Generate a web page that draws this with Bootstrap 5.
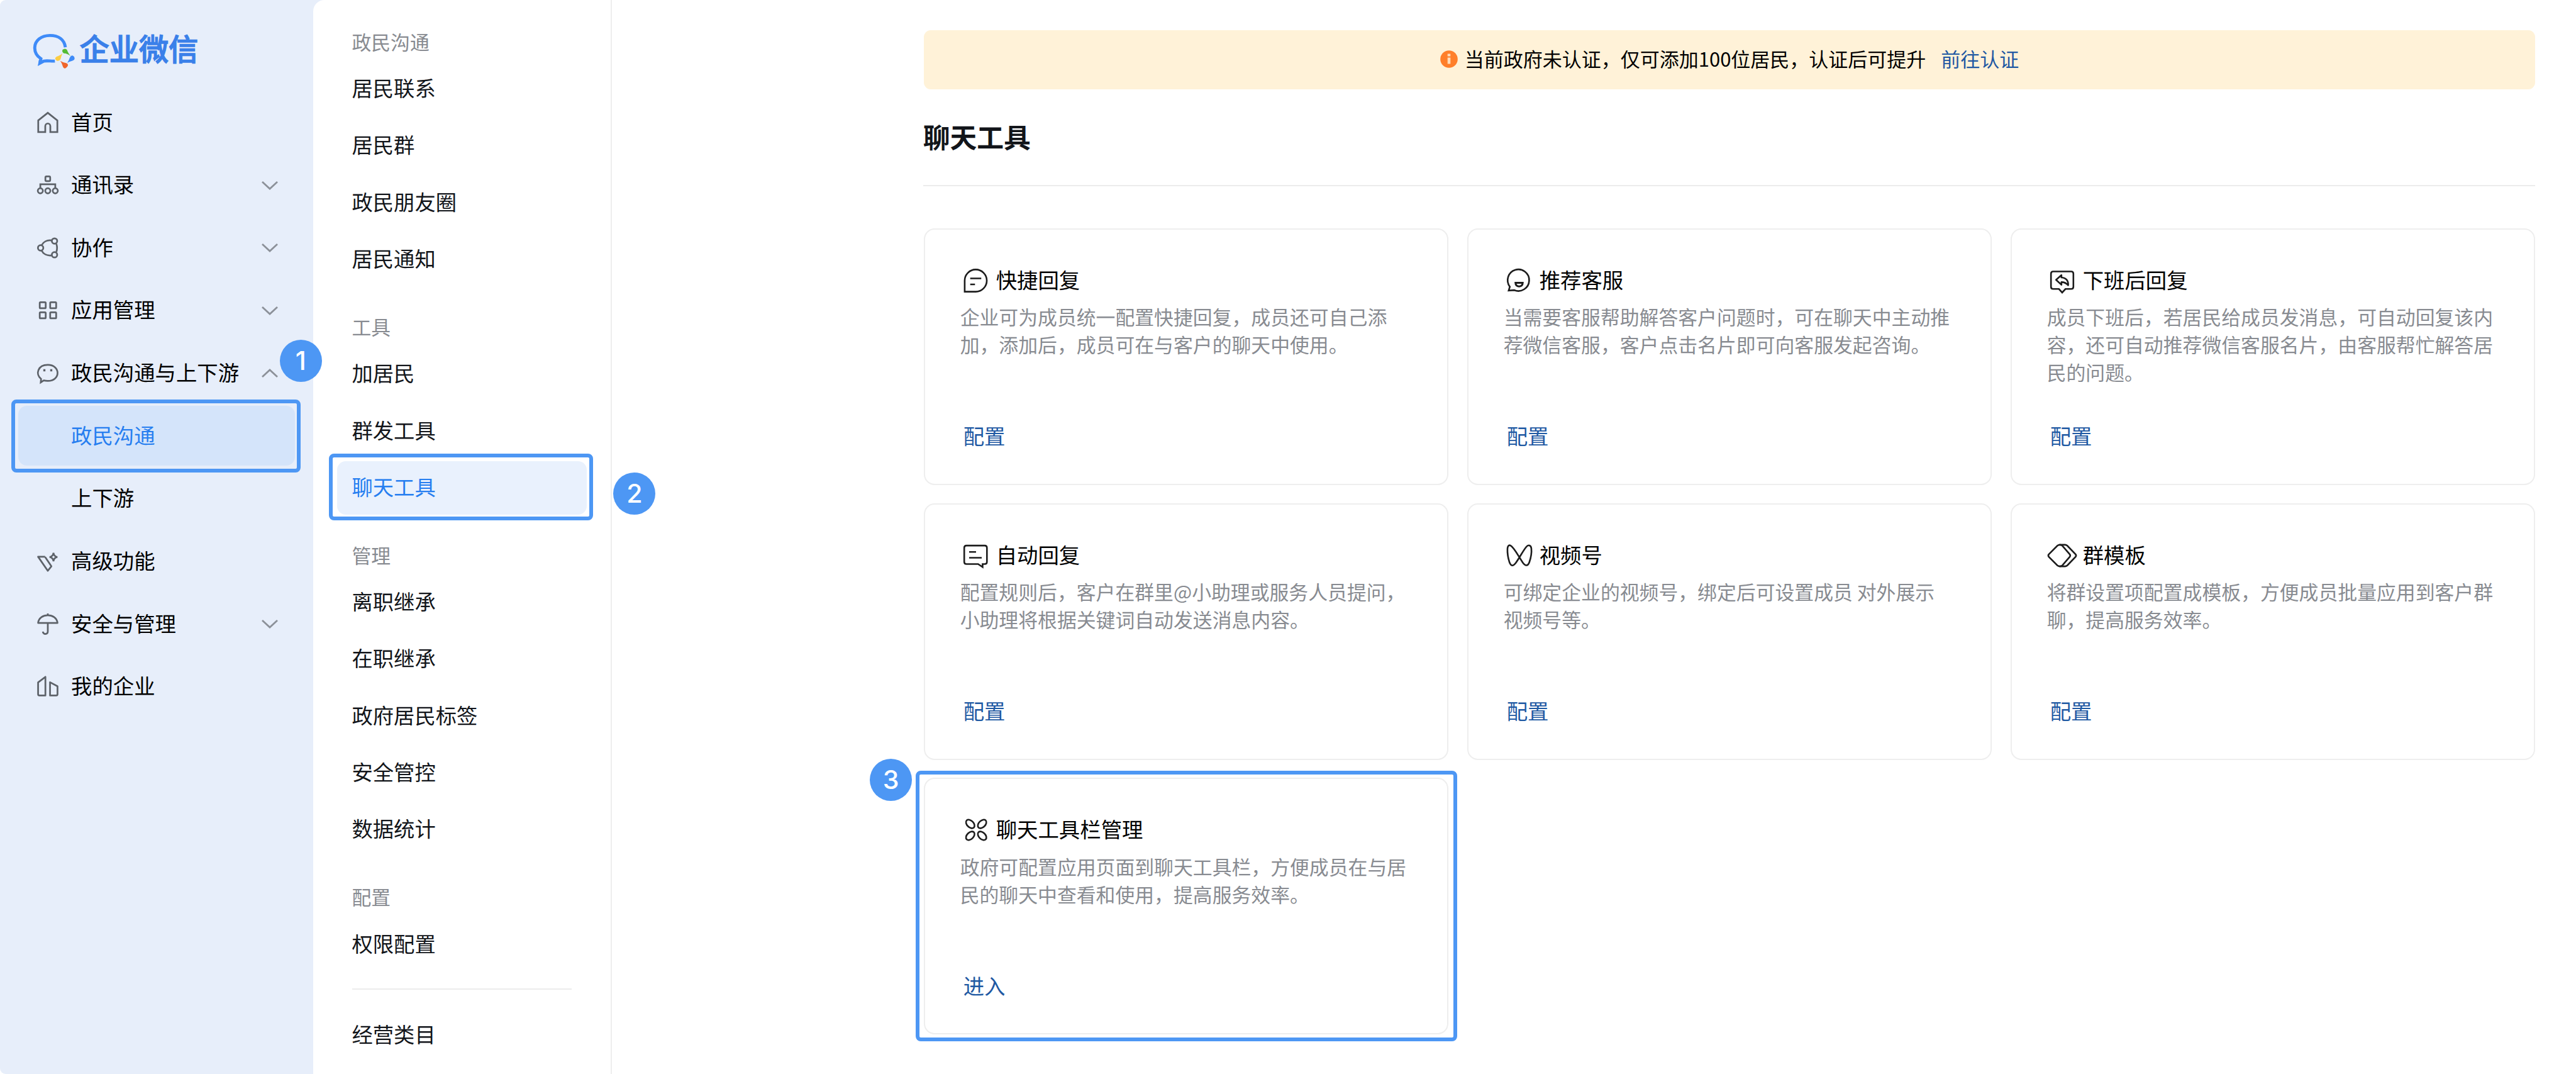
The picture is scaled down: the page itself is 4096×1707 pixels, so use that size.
<!DOCTYPE html>
<html lang="zh-CN">
<head>
<meta charset="utf-8">
<meta name="viewport" content="width=device-width, initial-scale=1">
<title>企业微信 - 聊天工具</title>
<link href="https://cdn.jsdelivr.net/npm/bootstrap@5.3.0/dist/css/bootstrap.min.css" rel="stylesheet">
<style>
  html, body { height: 100%; }
  body { font-family: "Noto Sans CJK SC", sans-serif; font-size: 33.4px; color: #000; background: #fff; overflow: hidden; }
  a { text-decoration: none; }
  .shell { height: 1707px; position: relative; }
  .leftzone { background: #e7eefa; border-radius: 9px 0 0 9px; }
  .side { width: 498px; }
  .brand { height: 144.7px; padding-left: 51px; padding-top: 51px; }
  .brand-name { font-size: 47.2px; font-weight: 500; -webkit-text-stroke: 1.3px #3a80e9; line-height: 50px; color: #3a80e9; margin-left: 6.5px; }
  .side .nav-link { height: 99.67px; padding: 0 56px 4px 57px; color: #000; line-height: 40px; white-space: nowrap; }
  .side .nav-link span { margin-left: 18px; }
  .side .nav-link .sub-label { margin-left: 56px; }
  .side .picked { color: #267ef0; position: relative; z-index: 0; }
  .side .picked::before { content: ""; position: absolute; z-index: -1; inset: 2.5px 28.8px 2.5px 28.8px; background: #d4e4fa; border-radius: 14px; }
  .glyph { width: 38px; height: 38px; flex: none; fill: none; stroke: #5d6269; stroke-width: 1.15; overflow: visible; position: relative; top: 2px; }
  .chev { width: 26px; height: 15px; flex: none; fill: none; stroke: #8c9199; stroke-width: 2.8; margin-left: auto; position: relative; top: 3px; overflow: visible; }
  .subnav { width: 474.5px; background: #fff; border-right: 2.4px solid #eee; border-top-left-radius: 18px; padding-top: 37.8px; }
  .subnav h6 { height: 56.4px; line-height: 56.4px; font-size: 30.8px; font-weight: 400; color: #888b91; margin: 0; padding-left: 61.5px; }
  .subnav .nav { margin-bottom: 36px; }
  .subnav .nav-link { font-size: 33.3px; height: 90.2px; line-height: 90.2px; padding: 0 0 0 61.5px; color: #12151a; position: relative; z-index: 0; }
  .subnav .picked { color: #267ef0; }
  .subnav .picked::before { content: ""; position: absolute; z-index: -1; inset: 5.5px 38px -0.500px 38.4px; background: #e9f1fd; border-radius: 14px; }
  .subnav hr { border: 0; height: 2.4px; background: #ececec; opacity: 1; margin: -9.1px 62px 25.3px 62.3px; }
  .subnav .last-group { margin-bottom: 0; }
  .stage { padding: 47.5px 64.6px 0 496.2px; }
  .notice { height: 94.2px; background: #fff2d8; border: 0; border-radius: 11px; padding: 0 0 3px; font-size: 31px; margin: 0; color: #000; }
  .notice svg { width: 28px; height: 28px; margin-right: 11px; position: relative; top: 1px; }
  .blue-link { color: #1f59a3; }
  .page-title { font-size: 42.8px; font-weight: 700; line-height: 60px; color: #12151a; margin: 44px 0 0 -1px; padding-bottom: 48.1px; border-bottom: 2.4px solid #ececec; }
  .tools { display: grid; grid-template-columns: repeat(3, 834.4px); column-gap: 29.6px; row-gap: 28.5px; margin-top: 67.4px; }
  .tools .card { height: 408.1px; border: 2.4px solid #eee; border-radius: 17px; padding: 56px 50px 0 56px; }
  .tool-head { height: 50px; padding-left: 5px; line-height: 50px; }
  .tool-head svg { width: 38px; height: 38px; fill: none; stroke: #1c1c1c; stroke-width: 1.1; overflow: visible; margin-right: 14px; position: relative; top: 0; }
  .tool-head span { position: relative; top: -2px; }
  .tool-text { font-size: 30.85px; line-height: 44px; height: 166px; color: #888b91; margin: 10.2px 0 0; width: 712px; }
  .tool-link { line-height: 50px; margin: 20px 0 0 5px; align-self: flex-start; }
  /* guide marks laid over the page */
  .frame { position: absolute; z-index: 2; border: 6.6px solid #4d97f4; border-radius: 8px; }
  .step { position: absolute; z-index: 3; width: 67px; height: 67px; border-radius: 50%; background: #4d97f4; color: #fff; font: 500 41px/67px Inter, "Liberation Sans", sans-serif; text-align: center; }
  .frame-a { left: 17.5px; top: 634.7px; width: 460.7px; height: 116.3px; }
  .frame-b { left: 522.5px; top: 721.4px; width: 420.7px; height: 106px; }
  .frame-c { left: 1456px; top: 1225px; width: 860.5px; height: 430.3px; }
  .step-a { left: 444.7px; top: 539.5px; }
  .step-b { left: 975.3px; top: 750.6px; }
  .step-c { left: 1383px; top: 1206px; }
</style>
<script src="https://cdn.jsdelivr.net/npm/bootstrap@5.3.0/dist/js/bootstrap.bundle.min.js"></script>
</head>
<body>
<div class="shell d-flex">
  <div class="leftzone d-flex flex-shrink-0">
    <aside class="side">
      <div class="brand d-flex align-items-start">
        <svg width="69" height="60.1" viewBox="50 50 310 270" fill="none">
          <path d="M288 158C280 105 240 74 178 74C115 74 69 112 69 162C69 195 86 222 113 240L106 272L134 257C160 252 185 259 213 257" stroke="#3f8bf8" stroke-width="22"/>
          <path d="M95 287L98 250L135 262Z" fill="#3f8bf8"/>
          <path d="M268 176q18-14 31 0q6 20 26 46q-22-19-48-20q-16-10-9-26Z" fill="#55bb33"/>
          <path d="M215 240q2-14 20-18q20-6 32-20q-8 18-14 42q-10 14-25 11q-12-6-13-15Z" fill="#fbcd45"/>
          <path d="M354 238q-1 14-18 17q-18 4-35 15q12-16 18-37q10-20 23-14q12 6 12 19Z" fill="#3f8bf8"/>
          <path d="M286 310q-14-2-18-20q-4-18-17-34q20 13 43 15q16 6 11 21q-8 15-19 18Z" fill="#f0652b"/>
        </svg>
        <div class="brand-name">企业微信</div>
      </div>
      <nav class="nav flex-column">
        <a class="nav-link d-flex align-items-center" href="#"><svg class="glyph" viewBox="0 0 16 16"><path d="M1.6 6.5L8 1.4l6.4 5.1v7.8H9.7v-3.9c0-2.5-3.4-2.5-3.4 0v3.9H1.6Z"/></svg><span>首页</span></a>
        <a class="nav-link d-flex align-items-center" href="#"><svg class="glyph" viewBox="0 0 16 16"><rect x="6.4" y="2.3" width="3.2" height="3.1" rx=".7"/><path d="M3 9.9V7.5h10v2.4"/><circle cx="3" cy="11.9" r="1.7"/><circle cx="8" cy="11.9" r="1.7"/><circle cx="13" cy="11.9" r="1.7"/></svg><span>通讯录</span><svg class="chev" viewBox="0 0 26 15"><path d="M1 1l12 11L25 1"/></svg></a>
        <a class="nav-link d-flex align-items-center" href="#"><svg class="glyph" viewBox="0 0 16 16"><circle cx="3.2" cy="8" r="1.8"/><circle cx="12.5" cy="3.4" r="1.8"/><circle cx="12.5" cy="12.6" r="1.8"/><path d="M3.9 6.2C5 4 7.400 2.600 10.500 3M3.900 9.800C5 12 7.400 13.400 10.500 13M13.700 5.200q1 2.800 0 5.600"/></svg><span>协作</span><svg class="chev" viewBox="0 0 26 15"><path d="M1 1l12 11L25 1"/></svg></a>
        <a class="nav-link d-flex align-items-center" href="#"><svg class="glyph" viewBox="0 0 16 16"><rect x="2.600" y="2.700" width="4" height="4" rx=".5"/><rect x="9.600" y="2.700" width="4" height="4" rx=".5"/><rect x="2.600" y="9.400" width="4" height="4" rx=".5"/><rect x="9.600" y="9.400" width="4" height="4" rx=".5"/></svg><span>应用管理</span><svg class="chev" viewBox="0 0 26 15"><path d="M1 1l12 11L25 1"/></svg></a>
        <a class="nav-link d-flex align-items-center" href="#"><svg class="glyph" viewBox="0 0 16 16"><path d="M3.500 11.900C-.6 8.600 1.400 2.500 8 2.500c8.700 0 8.700 10.700 0 10.700-1.300 0-2-.1-2.700-.3l-2 1.300Z"/><path d="M5.700 5.400v1.400M10.300 5.400v1.400" stroke-width="1.400"/></svg><span>政民沟通与上下游</span><svg class="chev" viewBox="0 0 26 15"><path d="M1 12L13 1l12 11"/></svg></a>
        <a class="nav-link picked d-flex align-items-center" href="#"><span class="sub-label">政民沟通</span></a>
        <a class="nav-link d-flex align-items-center" href="#"><span class="sub-label">上下游</span></a>
        <a class="nav-link d-flex align-items-center" href="#"><svg class="glyph" viewBox="0 0 16 16"><path d="M6.200 5H1.500L8 14.400 10.400 11.400 6.200 5.200" stroke-linejoin="round"/><path d="M11.800 2.400q.3 2.500 2.600 2.800-2.300.3-2.600 2.800-.3-2.500-2.600-2.800 2.300-.3 2.600-2.800Z"/></svg><span>高级功能</span></a>
        <a class="nav-link d-flex align-items-center" href="#"><svg class="glyph" viewBox="0 0 16 16"><path d="M1.500 7.200C2.300.3 13.700.3 14.500 7.200ZM8 1.900V.8M8 7.200v5.600c0 2.300-3.200 2.300-3.300.2" stroke-linejoin="round"/></svg><span>安全与管理</span><svg class="chev" viewBox="0 0 26 15"><path d="M1 1l12 11L25 1"/></svg></a>
        <a class="nav-link d-flex align-items-center" href="#"><svg class="glyph" viewBox="0 0 16 16"><path d="M1.500 5.300L6.400 1.600v12.500H2.400q-.9 0-.9-.9ZM9.500 5.200l5 2.700v5.300q0 .9-.9.900H9.500Z" stroke-linejoin="round"/></svg><span>我的企业</span></a>
      </nav>
    </aside>
    <aside class="subnav">
      <h6>政民沟通</h6>
      <nav class="nav flex-column">
        <a class="nav-link" href="#">居民联系</a>
        <a class="nav-link" href="#">居民群</a>
        <a class="nav-link" href="#">政民朋友圈</a>
        <a class="nav-link" href="#">居民通知</a>
      </nav>
      <h6>工具</h6>
      <nav class="nav flex-column">
        <a class="nav-link" href="#">加居民</a>
        <a class="nav-link" href="#">群发工具</a>
        <a class="nav-link picked" href="#">聊天工具</a>
      </nav>
      <h6>管理</h6>
      <nav class="nav flex-column">
        <a class="nav-link" href="#">离职继承</a>
        <a class="nav-link" href="#">在职继承</a>
        <a class="nav-link" href="#">政府居民标签</a>
        <a class="nav-link" href="#">安全管控</a>
        <a class="nav-link" href="#">数据统计</a>
      </nav>
      <h6>配置</h6>
      <nav class="nav flex-column">
        <a class="nav-link" href="#">权限配置</a>
      </nav>
      <hr>
      <nav class="nav flex-column last-group">
        <a class="nav-link" href="#">经营类目</a>
      </nav>
    </aside>
  </div>
  <main class="stage flex-grow-1">
    <div class="notice alert d-flex align-items-center justify-content-center">
      <svg viewBox="0 0 28 28"><circle cx="14" cy="14" r="13.800" fill="#ff7f2a"/><path d="M14 5.500v4M14 11.500v10" stroke="#ffdcb8" stroke-width="4.600"/></svg>
      <span>当前政府未认证，仅可添加100位居民，认证后可提升</span>
      <a class="blue-link ms-4" href="#">前往认证</a>
    </div>
    <h1 class="page-title">聊天工具</h1>
    <section class="tools">
      <div class="card">
        <div class="tool-head d-flex align-items-center"><svg viewBox="0 0 16 16"><path d="M.8 15.400V8a7.400 7.400 0 1 1 7.400 7.400Z"/><path d="M4.500 6.500h7.400M4.500 10.500h3.200"/></svg><span>快捷回复</span></div>
        <p class="tool-text">企业可为成员统一配置快捷回复，成员还可自己添加，添加后，成员可在与客户的聊天中使用。</p>
        <a class="blue-link tool-link" href="#">配置</a>
      </div>
      <div class="card">
        <div class="tool-head d-flex align-items-center"><svg viewBox="0 0 16 16"><path d="M2 12.100A7.200 7.200 0 1 1 5 14.400L1.200 14.700Z"/><path d="M5.800 9.500h4.800c0 3.200-4.800 3.200-4.800 0Z" stroke-width="1.300"/></svg><span>推荐客服</span></div>
        <p class="tool-text">当需要客服帮助解答客户问题时，可在聊天中主动推荐微信客服，客户点击名片即可向客服发起咨询。</p>
        <a class="blue-link tool-link" href="#">配置</a>
      </div>
      <div class="card">
        <div class="tool-head d-flex align-items-center"><svg viewBox="0 0 16 16"><path d="M2 1.900h12q1.500 0 1.500 1.500v8.700q0 1.500-1.500 1.500h-3.800L8 16l-2.200-2.400H2Q.5 13.600.5 12.100V3.400Q.5 1.900 2 1.900Z"/><path d="M7.500 4.300L3.900 7.500 7.500 10.800V9c2 0 3.100.5 4.500 2.100C12.200 8.100 10.600 6.100 7.500 5.900Z" stroke-linejoin="round"/></svg><span>下班后回复</span></div>
        <p class="tool-text">成员下班后，若居民给成员发消息，可自动回复该内容，还可自动推荐微信客服名片，由客服帮忙解答居民的问题。</p>
        <a class="blue-link tool-link" href="#">配置</a>
      </div>
      <div class="card">
        <div class="tool-head d-flex align-items-center"><svg viewBox="0 0 16 16"><path d="M2 1.300h12.200q1.500 0 1.500 1.500v9.400q0 1.500-1.500 1.500h-1.400v2L9.800 13.700H2Q.5 13.700.5 12.200V2.800Q.5 1.300 2 1.300Z"/><path d="M3.800 5.600h4.600M3.800 9.500h8.400"/></svg><span>自动回复</span></div>
        <p class="tool-text">配置规则后，客户在群里@小助理或服务人员提问，小助理将根据关键词自动发送消息内容。</p>
        <a class="blue-link tool-link" href="#">配置</a>
      </div>
      <div class="card">
        <div class="tool-head d-flex align-items-center"><svg viewBox="0 0 16 16"><path d="M8.300 9C6.600 6.300 4.800 3.200 3 1.700 1.500.4.500 1.400.4 3.600c-.1 2.800.4 6 1.300 8.800 1 2.900 2.500 2.900 4.400.3C8.800 9 10.300 5.600 12.900 2.300c1.500-1.900 3.300-1.300 3.500 1 .3 3-.3 6.100-1.300 9-1 2.900-2.700 2.900-4.500.3Z"/></svg><span>视频号</span></div>
        <p class="tool-text">可绑定企业的视频号，绑定后可设置成员 对外展示<br>视频号等。</p>
        <a class="blue-link tool-link" href="#">配置</a>
      </div>
      <div class="card">
        <div class="tool-head d-flex align-items-center"><svg viewBox="0 0 16 16"><path d="M-1 7.200L4.800 1.400q.8-.6 1.600-.6 1 0 1.700.6l5 5.800q.6.800 0 1.600l-5 5.800q-.7.600-1.700.6-.8 0-1.600-.6L-1 8.800q-.6-.8 0-1.600Z"/><path d="M6.200.8h3.700q.8 0 1.500.6l5.600 5.800q.6.800 0 1.600l-5.600 5.800q-.7.600-1.500.6H6.200"/></svg><span>群模板</span></div>
        <p class="tool-text">将群设置项配置成模板，方便成员批量应用到客户群聊，提高服务效率。</p>
        <a class="blue-link tool-link" href="#">配置</a>
      </div>
      <div class="card">
        <div class="tool-head d-flex align-items-center"><svg viewBox="0 0 16 16"><g transform="translate(8.500 8)"><ellipse cx="-5.600" cy="0" rx="3.400" ry="2.200" transform="rotate(45)"/><ellipse cx="5.600" cy="0" rx="3.400" ry="2.200" transform="rotate(45)"/><ellipse cx="-5.600" cy="0" rx="3.400" ry="2.200" transform="rotate(-45)"/><ellipse cx="5.600" cy="0" rx="3.400" ry="2.200" transform="rotate(-45)"/></g></svg><span>聊天工具栏管理</span></div>
        <p class="tool-text">政府可配置应用页面到聊天工具栏，方便成员在与居民的聊天中查看和使用，提高服务效率。</p>
        <a class="blue-link tool-link" href="#">进入</a>
      </div>
    </section>
  </main>
  <div class="frame frame-a"></div>
  <div class="frame frame-b"></div>
  <div class="frame frame-c"></div>
  <div class="step step-a">1</div>
  <div class="step step-b">2</div>
  <div class="step step-c">3</div>
</div>
</body>
</html>
